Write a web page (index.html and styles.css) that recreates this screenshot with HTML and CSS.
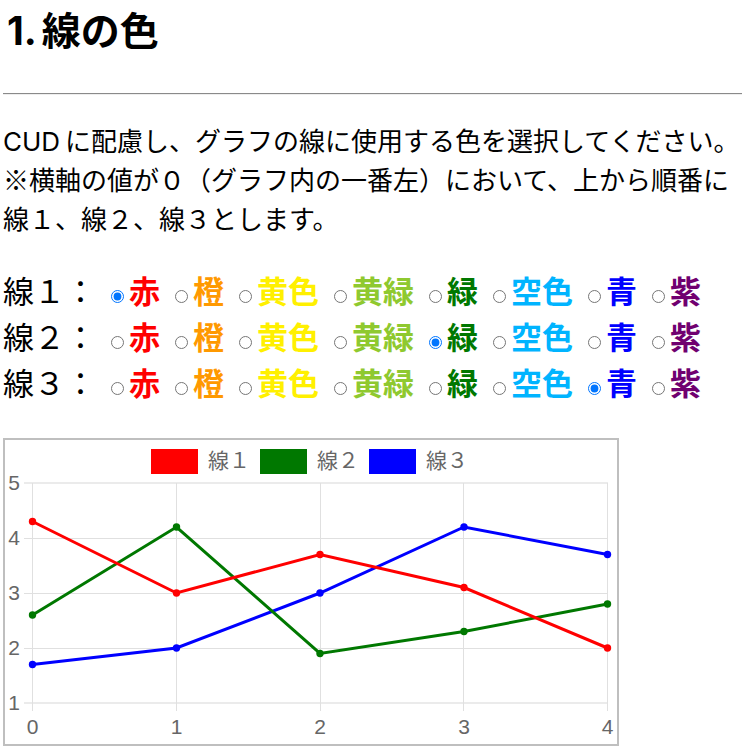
FILE: index.html
```html
<!DOCTYPE html>
<html lang="ja">
<head>
<meta charset="utf-8">
<meta name="viewport" content="width=device-width, initial-scale=1">
<title>線の色</title>
<link rel="stylesheet" href="styles.css">
</head>
<body>
<h1 class="title"><span class="number">1.</span>線の色</h1>
<hr class="rule">
<p class="lead"><span class="term">CUD</span>に配慮し、グラフの線に使用する色を選択してください。<br>※横軸の値が０（グラフ内の一番左）において、上から順番に<br>線１、線２、線３とします。</p>
<form class="picker">
  <div class="row" role="radiogroup" aria-labelledby="line1">
    <span class="name" id="line1">線１：</span>
    <label class="option red"><input type="radio" name="line1" checked>赤</label>
    <label class="option orange"><input type="radio" name="line1">橙</label>
    <label class="option yellow"><input type="radio" name="line1">黄色</label>
    <label class="option lime"><input type="radio" name="line1">黄緑</label>
    <label class="option green"><input type="radio" name="line1">緑</label>
    <label class="option sky"><input type="radio" name="line1">空色</label>
    <label class="option blue"><input type="radio" name="line1">青</label>
    <label class="option purple"><input type="radio" name="line1">紫</label>
  </div>
  <div class="row" role="radiogroup" aria-labelledby="line2">
    <span class="name" id="line2">線２：</span>
    <label class="option red"><input type="radio" name="line2">赤</label>
    <label class="option orange"><input type="radio" name="line2">橙</label>
    <label class="option yellow"><input type="radio" name="line2">黄色</label>
    <label class="option lime"><input type="radio" name="line2">黄緑</label>
    <label class="option green"><input type="radio" name="line2" checked>緑</label>
    <label class="option sky"><input type="radio" name="line2">空色</label>
    <label class="option blue"><input type="radio" name="line2">青</label>
    <label class="option purple"><input type="radio" name="line2">紫</label>
  </div>
  <div class="row" role="radiogroup" aria-labelledby="line3">
    <span class="name" id="line3">線３：</span>
    <label class="option red"><input type="radio" name="line3">赤</label>
    <label class="option orange"><input type="radio" name="line3">橙</label>
    <label class="option yellow"><input type="radio" name="line3">黄色</label>
    <label class="option lime"><input type="radio" name="line3">黄緑</label>
    <label class="option green"><input type="radio" name="line3">緑</label>
    <label class="option sky"><input type="radio" name="line3">空色</label>
    <label class="option blue"><input type="radio" name="line3" checked>青</label>
    <label class="option purple"><input type="radio" name="line3">紫</label>
  </div>
</form>
<svg class="chart" viewBox="0 0 612 304" role="img" aria-label="線１、線２、線３">
  <g class="grid">
    <path class="edge" d="M19 43H603M19 263H603"/>
    <path d="M19 98.5H603M19 153.5H603M19 208.5H603"/>
    <path d="M27.5 43V271M171.5 43V271M315.5 43V271M458.5 43V271M602.5 43V271"/>
  </g>
  <g class="legend">
    <rect class="fill-red" x="146" y="9" width="47" height="25"/>
    <text x="203" y="28">線１</text>
    <rect class="fill-green" x="255" y="9" width="47" height="25"/>
    <text x="312" y="28">線２</text>
    <rect class="fill-blue" x="364" y="9" width="47" height="25"/>
    <text x="421" y="28">線３</text>
  </g>
  <g class="ticks-y">
    <text x="15" y="50">5</text>
    <text x="15" y="105">4</text>
    <text x="15" y="160">3</text>
    <text x="15" y="215">2</text>
    <text x="15" y="270">1</text>
  </g>
  <g class="ticks-x">
    <text x="27.5" y="294">0</text>
    <text x="171.5" y="294">1</text>
    <text x="315" y="294">2</text>
    <text x="459" y="294">3</text>
    <text x="602.5" y="294">4</text>
  </g>
  <g class="series s-blue">
    <polyline points="27.5,224.5 171.5,208 315,153 459,87 602.5,114.5"/>
    <circle cx="27.5" cy="224.5" r="3.7"/><circle cx="171.5" cy="208" r="3.7"/><circle cx="315" cy="153" r="3.7"/><circle cx="459" cy="87" r="3.7"/><circle cx="602.5" cy="114.5" r="3.7"/>
  </g>
  <g class="series s-green">
    <polyline points="27.5,175 171.5,87 315,213.5 459,191.5 602.5,164"/>
    <circle cx="27.5" cy="175" r="3.7"/><circle cx="171.5" cy="87" r="3.7"/><circle cx="315" cy="213.5" r="3.7"/><circle cx="459" cy="191.5" r="3.7"/><circle cx="602.5" cy="164" r="3.7"/>
  </g>
  <g class="series s-red">
    <polyline points="27.5,81.5 171.5,153 315,114.5 459,147.5 602.5,208"/>
    <circle cx="27.5" cy="81.5" r="3.7"/><circle cx="171.5" cy="153" r="3.7"/><circle cx="315" cy="114.5" r="3.7"/><circle cx="459" cy="147.5" r="3.7"/><circle cx="602.5" cy="208" r="3.7"/>
  </g>
</svg>
</body>
</html>
```

FILE: styles.css
```css
body {
  margin: 0 0 0 3px;
  background: #fff;
  color: #000;
  font-family: "Noto Sans CJK JP", sans-serif;
  font-size: 26px;
  line-height: 39px;
}

.title {
  display: flex;
  align-items: baseline;
  gap: 5px;
  margin: 0;
  padding: 0 0 36px 4px;
  font-size: 39px;
  line-height: 57px;
}

.number,
.term {
  font-family: Inter, "Liberation Sans", sans-serif;
  line-height: 1;
}

.term {
  margin-right: 5px;
}

.rule {
  margin: 0;
  border: 0;
  border-top: 1px solid #8a8a8a;
  border-bottom: 1px solid #eee;
}

.lead {
  margin: 0;
  padding: 25px 0 30px;
  white-space: nowrap;
}

.row {
  display: flex;
  gap: 15px;
  font-size: 31px;
  line-height: 46px;
  white-space: nowrap;
}

.option {
  display: flex;
  align-items: center;
  gap: 5px;
  font-weight: bold;
}

.option input {
  width: 13px;
  height: 13px;
  margin: 12px 0 0;
}

.red { color: #f00; }
.orange { color: #ff9900; }
.yellow { color: #fff000; }
.lime { color: #8fc92f; }
.green { color: #007800; }
.sky { color: #00b4ff; }
.blue { color: #00f; }
.purple { color: #700070; }

.chart {
  display: block;
  box-sizing: border-box;
  width: 100%;
  max-width: 616px;
  margin-top: 33px;
  border: 2px solid #bfbfbf;
}

.chart text {
  fill: #666;
  font-family: "Liberation Sans", "Noto Sans CJK JP", sans-serif;
  font-size: 21px;
}

.ticks-y text { text-anchor: end; }
.ticks-x text { text-anchor: middle; }

.grid path {
  fill: none;
  stroke: #e0e0e0;
  stroke-width: 1;
}

.grid .edge {
  stroke: #ebebeb;
  stroke-width: 2;
}

.fill-red { fill: #f00; }
.fill-green { fill: #007800; }
.fill-blue { fill: #00f; }

.series polyline {
  fill: none;
  stroke-width: 3;
}

.s-red { fill: #f00; stroke: #f00; }
.s-green { fill: #007800; stroke: #007800; }
.s-blue { fill: #00f; stroke: #00f; }
.series circle { stroke: none; }
```
